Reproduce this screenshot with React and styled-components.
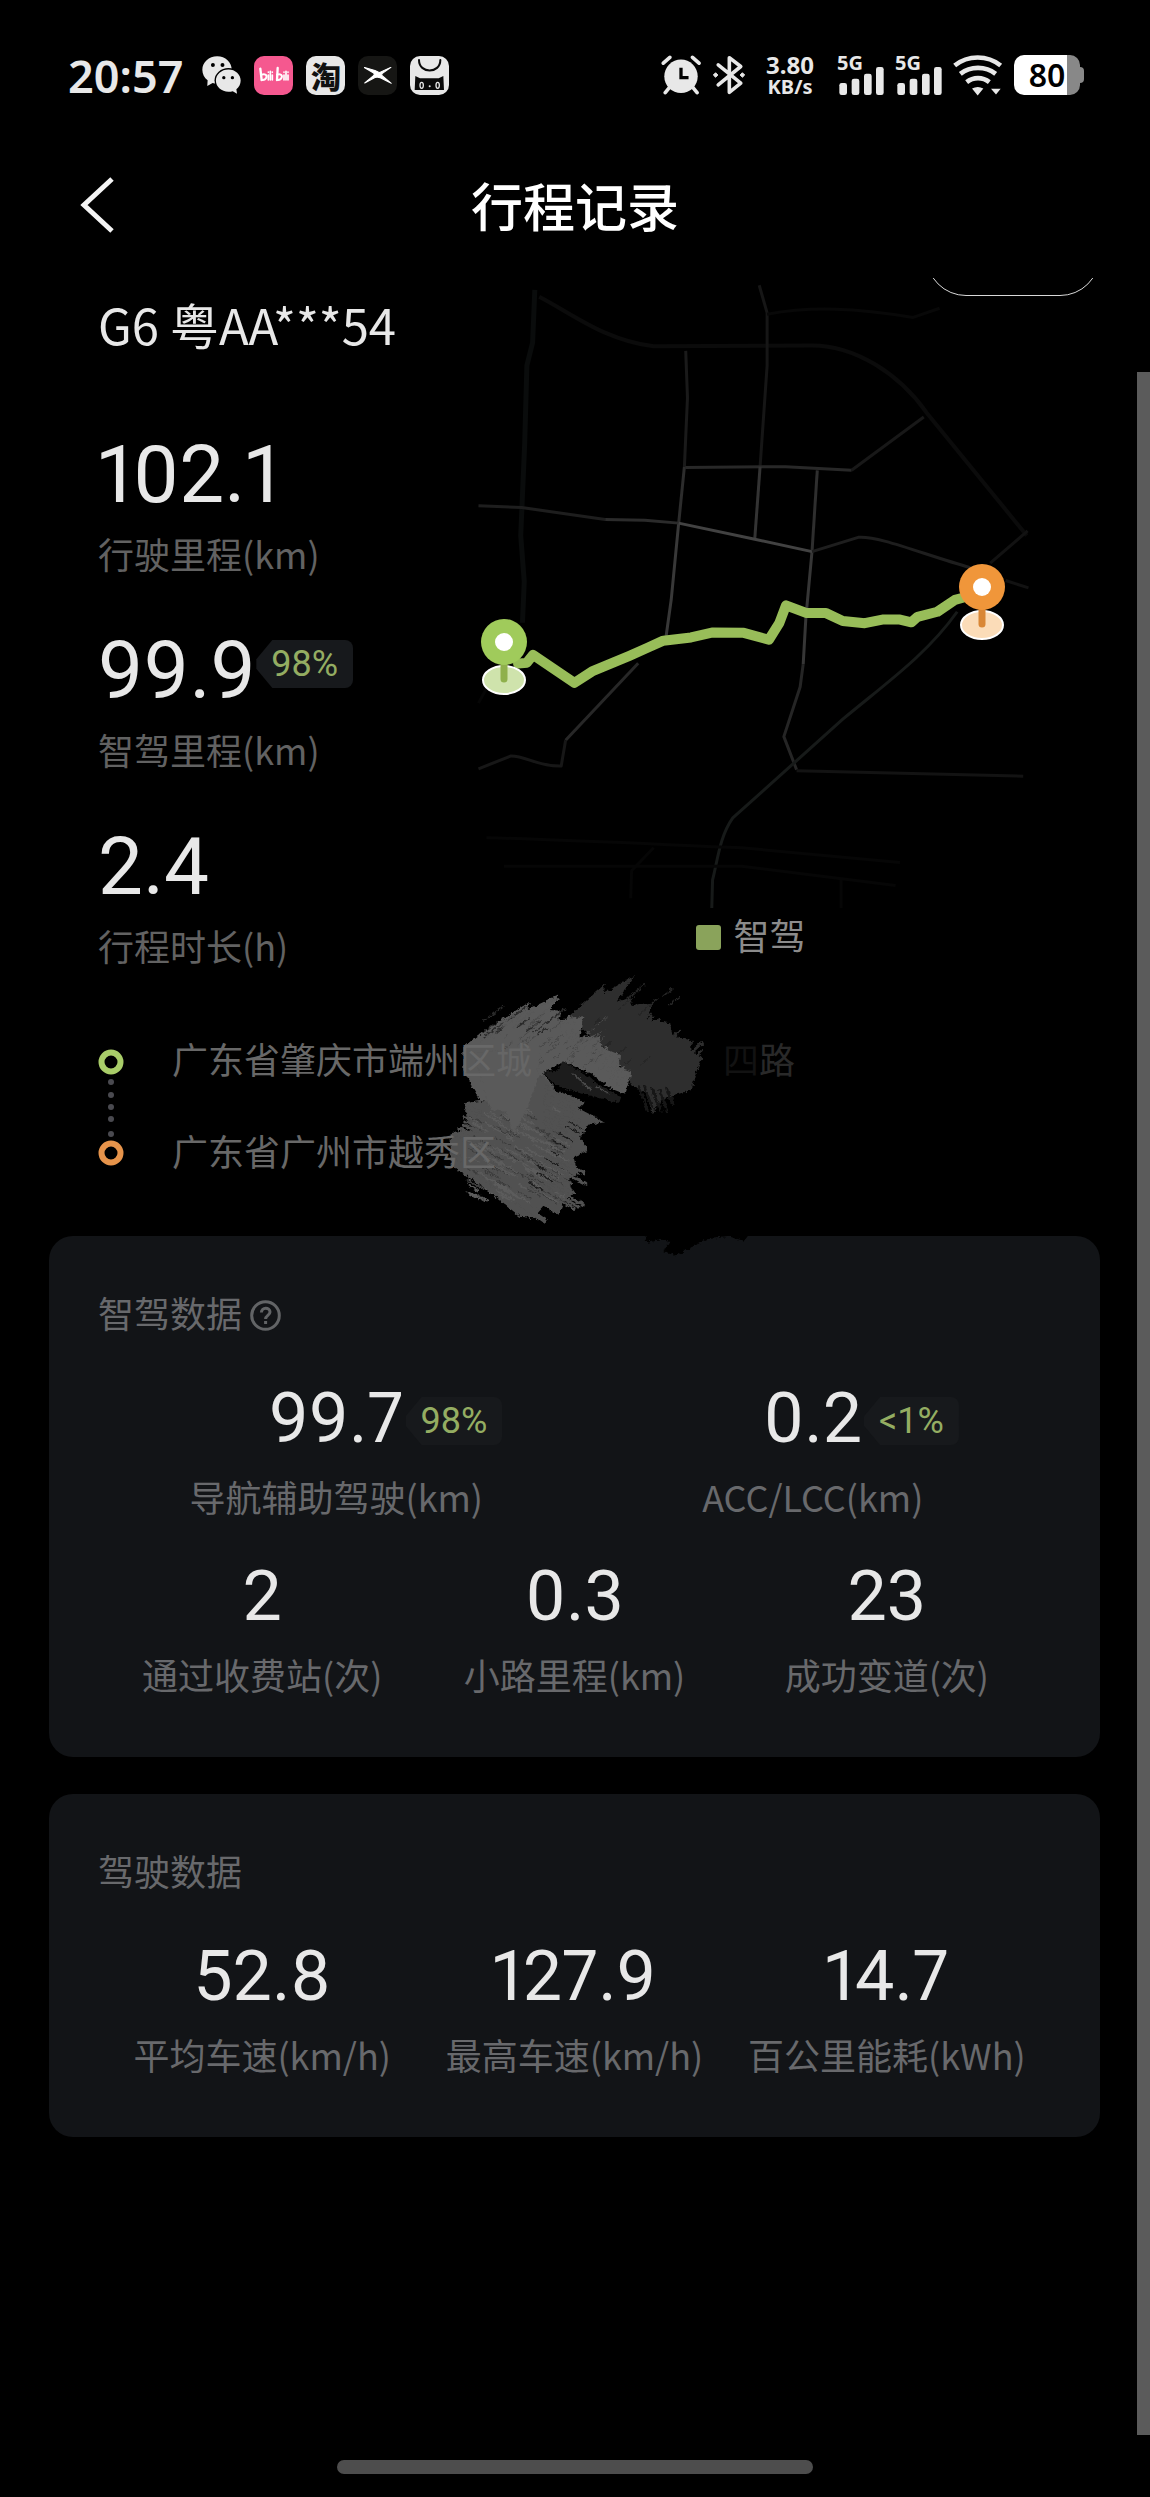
import React from "react";
import styled, { createGlobalStyle } from "styled-components";

const textFont = `"Noto Sans CJK SC", "Noto Sans", sans-serif`;
const numberFont = `Roboto, "Noto Sans", sans-serif`;

const GlobalStyle = createGlobalStyle`
  *, *::before, *::after { box-sizing: border-box; }
  body { margin: 0; background: #000; font-family: ${textFont}; }
  h1, h2, p, dl, dd, dt, ul { margin: 0; padding: 0; font-weight: inherit; }
`;

const Page = styled.div`
  display: flex;
  flex-direction: column;
  min-height: 100vh;
  background: #000;
  color: #e8e8e8;
`;

/* ---------- status bar ---------- */

const StatusBar = styled.header`
  display: flex;
  justify-content: space-between;
  align-items: center;
  height: 150px;
  padding: 0 66px 0 68px;
  line-height: 1;
`;

const StatusGroup = styled.div`
  display: flex;
  align-items: center;
  gap: ${(p) => p.$gap}px;
`;

const Clock = styled.time`
  font: 600 45px/45px "Noto Sans", ${textFont};
  margin-right: 6px;
`;

const AppTile = styled.span`
  display: grid;
  place-items: center;
  width: 39px;
  height: 39px;
  border-radius: 10px;
  background: ${(p) => p.$bg};
  color: ${(p) => p.$fg};
  font: 900 30px/39px ${textFont};
`;

const NetSpeed = styled.div`
  display: flex;
  flex-direction: column;
  align-items: center;
  margin: 0 12px 0 9px;
  font: 700 24px/24px "Noto Sans", sans-serif;
`;

const NetUnit = styled.span`
  font-size: 20px;
  line-height: 20px;
  font-weight: 700;
`;

const Signal = styled.div`
  display: grid;
  width: 47px;
  height: 40px;

  > * { grid-area: 1 / 1; }
  > svg { align-self: end; justify-self: end; }
`;

const SignalLabel = styled.span`
  font: 700 20px/16px "Noto Sans", sans-serif;
`;

const Battery = styled.div`
  display: flex;
  align-items: center;
`;

const BatteryBody = styled.div`
  width: 66px;
  height: 40px;
  border-radius: 10px;
  background: linear-gradient(to right, #fff 80%, #888 80%);
  color: #000;
  text-align: center;
  font: 600 32px/40px "Noto Sans", sans-serif;
`;

const BatteryCap = styled.div`
  width: 4px;
  height: 16px;
  border-radius: 0 4px 4px 0;
  background: #888;
`;

/* ---------- title bar ---------- */

const TitleBar = styled.nav`
  display: grid;
  grid-template-columns: 1fr auto 1fr;
  align-items: center;
  height: 110px;
  margin-bottom: 18px;
  padding: 0 78px;
`;

const BackButton = styled.button`
  justify-self: start;
  display: flex;
  padding: 0;
  border: 0;
  background: none;
  color: #f4f4f4;
`;

const Title = styled.h1`
  font-size: 52px;
  line-height: 74px;
  font-weight: 500;
  color: #fff;
`;

/* ---------- body ---------- */

const Body = styled.div`
  flex: 1;
  display: flex;
  overflow: hidden;
`;

const Content = styled.main`
  position: relative;
  flex: 1;
  min-width: 0;
  padding: 0 37px 0 49px;
`;

const ScrollThumb = styled.div`
  width: 13px;
  margin-top: 94px;
  background: #5b5b5b;
`;

const PillButton = styled.button`
  position: absolute;
  top: -62px;
  right: 37px;
  width: 174px;
  height: 80px;
  border: 1px solid #d8d8d8;
  border-radius: 40px;
  background: none;
`;

const Trip = styled.section`
  display: grid;
  grid-template-columns: 362px 1fr;
  padding-left: 49px;
`;

const TripFacts = styled.div`
  padding-top: 18px;
`;

const Plate = styled.p`
  margin-bottom: 83px;
  font-size: 49px;
  line-height: 56px;
  white-space: nowrap;
`;

const FactList = styled.dl`
  display: flex;
  flex-direction: column;
  gap: 56px;
`;

const Fact = styled.div`
  display: flex;
  flex-direction: column-reverse;
  gap: 16px;
`;

const FactValue = styled.dd`
  display: flex;
  font: 400 80px/80px ${numberFont};
  font-variant-numeric: proportional-nums;
`;

const Label = styled.dt`
  font-size: 36px;
  line-height: 44px;
  white-space: nowrap;
  color: ${(p) => (p.$onCard ? "#68696c" : "#626262")};
`;

const Badge = styled.span`
  height: 48px;
  margin-top: 9px;
  padding: 0 15px;
  border-radius: 8px;
  background: #17191c;
  clip-path: polygon(16px 0, 100% 0, 100% 100%, 16px 100%, 0 60%, 0 40%);
  color: #94ad62;
  font: 400 36px/48px ${numberFont};
  white-space: nowrap;
`;

const MapPanel = styled.figure`
  margin: 0;
  padding-right: 58px;
  display: flex;
  flex-direction: column;
  align-items: center;
  gap: 4px;

  > svg { width: 100%; height: auto; }
`;

const Legend = styled.figcaption`
  display: flex;
  align-items: center;
  gap: 12px;
  font-size: 36px;
  line-height: 44px;
  color: #8b8b8b;

  &::before {
    content: "";
    width: 25px;
    height: 25px;
    margin-top: 6px;
    border-radius: 3px;
    background: #8aa35b;
  }
`;

/* ---------- addresses ---------- */

const Route = styled.section`
  position: relative;
  display: flex;
  gap: 48px;
  margin: 69px 0 64px;
  padding-left: 49px;

  > svg:first-child { margin-top: 13px; }
`;

const Scribble = styled.svg`
  position: absolute;
  left: 381px;
  top: -76px;
  z-index: 1;
  pointer-events: none;
`;

const AddressList = styled.ul`
  position: relative;
  z-index: 2;
  display: flex;
  flex-direction: column;
  gap: 48px;
  list-style: none;
`;

const Address = styled.li`
  font-size: 36px;
  line-height: 44px;
  color: #686868;
  white-space: nowrap;
`;

const Erased = styled.span`
  margin-left: ${(p) => p.$gap || 0}px;
  color: ${(p) => p.$tone};
`;

/* ---------- cards ---------- */

const Cards = styled.div`
  display: flex;
  flex-direction: column;
  gap: 37px;
`;

const Card = styled.section`
  padding: 54px 49px 61px;
  border-radius: 24px;
  background: #121417;
`;

const CardTitle = styled.h2`
  display: flex;
  align-items: center;
  gap: 8px;
  margin-bottom: 48px;
  font-size: 36px;
  line-height: 44px;
  color: #68696c;
`;

const HelpButton = styled.button`
  display: flex;
  margin-top: 6px;
  padding: 0;
  border: 0;
  background: none;
  color: #626466;
`;

const MetricRow = styled.dl`
  display: grid;
  grid-template-columns: repeat(${(p) => p.$columns}, 1fr);
  padding: 0 ${(p) => (p.$columns === 3 ? 8 : 0)}px;

  & + & { margin-top: 42px; }
`;

const Metric = styled.div`
  display: flex;
  flex-direction: column-reverse;
  align-items: center;
  gap: 20px;
`;

const MetricValue = styled.dd`
  position: relative;
  font: 400 70px/72px ${numberFont};
  font-variant-numeric: proportional-nums;

  ${Badge} {
    position: absolute;
    left: calc(100% + 2px);
    top: 6px;
  }
`;

const HomeArea = styled.footer`
  display: flex;
  justify-content: center;
  padding: 25px 0 23px;
`;

const HomeBar = styled.div`
  width: 476px;
  height: 14px;
  border-radius: 7px;
  background: #4d4d4d;
`;

/* ---------- icons ---------- */

const WechatIcon = () => (
  <svg width="39" height="39" viewBox="486 74 118 117" fill="#e8e8e8" aria-label="WeChat">
    <path d="M532 74c-25 0-45 18-45 41 0 13 6 24 16 32l-1 17 16-9c4 1 9 2 14 2 25 0 44-19 44-42s-19-41-44-41z" />
    <ellipse cx="566" cy="147" rx="42" ry="37" fill="#000" />
    <path d="M566 114c-21 0-38 15-38 34s17 34 38 34c5 0 9-1 13-2l13 8-2-14c8-6 13-15 13-26 0-19-16-34-37-34z" />
    <g fill="#000">
      <circle cx="519" cy="101" r="6" /><circle cx="548" cy="101" r="6" />
      <circle cx="552" cy="139" r="5" /><circle cx="578" cy="139" r="5" />
    </g>
  </svg>
);

const BiliMark = () => (
  <svg width="32" height="18" viewBox="0 0 96 54" fill="none" stroke="#fff" strokeWidth="5" strokeLinecap="round">
    <path d="M7 8l4 34M59 6l-2 36" strokeWidth="7" />
    <path d="M11 26c10-4 17 2 14 9s-8 8-14 7M57 26c10-4 17 2 14 9s-8 8-14 7" strokeWidth="6" />
    <path d="M31 27v15M37 16v26M43 27v15M31 18v1M43 18v1M78 27v15M84 16v26M90 27v15M78 18v1M90 18v1" />
  </svg>
);

const XpengMark = () => (
  <svg width="28" height="17" viewBox="970 108 82 50" fill="#fff">
    <path d="M970 109l32 9c6 2 9 6 14 6l33-15-24 17c-4 3-4 6 0 9l25 21-32-16c-6-3-10-3-16-1l-30 16 25-21c4-3 4-6 0-9z" stroke="#fff" strokeWidth="3" strokeLinejoin="round" />
  </svg>
);

const CatBagMark = () => (
  <svg width="39" height="39" viewBox="1107 74 117 117">
    <path d="M1134 86c0 42 64 42 64 0" fill="none" stroke="#0a0a0a" strokeWidth="6" strokeLinecap="round" />
    <path d="M1123 134l14 7h56l14-7 2 42h-88z" fill="#0a0a0a" />
    <g fill="none" stroke="#e8e8e8" strokeWidth="4">
      <ellipse cx="1142" cy="162" rx="5" ry="9" /><ellipse cx="1190" cy="162" rx="5" ry="9" />
    </g>
    <circle cx="1166" cy="165" r="3" fill="#e8e8e8" />
  </svg>
);

const AlarmIcon = () => (
  <svg width="40" height="40" viewBox="63 73 120 122" aria-label="Alarm">
    <g stroke="#e8e8e8" strokeWidth="11" strokeLinecap="round">
      <path d="M69 98l20-18M178 98l-20-18M88 172l-13 16M159 172l13 16" />
    </g>
    <circle cx="123" cy="138" r="51" fill="#e8e8e8" />
    <path d="M123 112v30h23" fill="none" stroke="#000" strokeWidth="10" />
  </svg>
);

const BluetoothIcon = () => (
  <svg width="34" height="40" viewBox="222 73 104 122" fill="none" stroke="#e8e8e8" strokeWidth="11" aria-label="Bluetooth">
    <path d="M241 103l69 56-35 28V81l35 27-69 56" strokeLinejoin="round" strokeLinecap="round" />
    <path d="M233 127l7 7-7 7-7-7zM315 127l7 7-7 7-7-7z" fill="#e8e8e8" strokeWidth="3" />
  </svg>
);

const SignalBars = () => (
  <svg width="45" height="28" viewBox="591 108 135 84" fill="#e8e8e8">
    <rect x="592" y="156" width="23" height="36" rx="7" />
    <rect x="629" y="143" width="23" height="49" rx="7" />
    <rect x="666" y="128" width="23" height="64" rx="7" />
    <rect x="702" y="108" width="23" height="84" rx="7" />
  </svg>
);

const WifiIcon = () => (
  <svg width="50" height="41" viewBox="941 71 150 122" fill="none" stroke="#e8e8e8" strokeWidth="14" aria-label="Wi-Fi">
    <path d="M946 102c40-32 98-32 138 0M963 127c30-24 76-24 106 0M982 152c20-16 48-16 68 0" />
    <path d="M998 171c12-6 23-6 34 0l-17 21zM1055 172h29l-14 17z" fill="#e8e8e8" stroke="none" />
  </svg>
);

const HelpIcon = () => (
  <svg width="31" height="31" viewBox="0 0 31 31" fill="none" stroke="currentColor" strokeWidth="3">
    <circle cx="15.5" cy="15.5" r="13.8" />
    <path d="M11.4 12.6c0-6 8.6-5.6 8.6-.6 0 3.400-4.400 3.400-4.400 7M15.600 21v3" />
  </svg>
);

/* ---------- map ---------- */

const roads = [
  { d: "M170 65L165 180L152 230L147 400L138 600L146 700L142 790", c: "#0a0c0c", w: 5 },
  { d: "M180 80C260 120 330 175 440 188L800 186C900 186 1000 250 1060 332L1288 600", c: "#0b0b0b", w: 4 },
  { d: "M680 55L698 115L698 230L682 450", c: "#161616" },
  { d: "M698 118C800 100 900 105 1030 125L1090 105", c: "#080808" },
  { d: "M513 198L517 300L510 450", c: "#1a1a1a" },
  { d: "M510 450L497 573", c: "#2c2c2c" },
  { d: "M497 573L480 740L468 822", c: "#383838" },
  { d: "M512 452L740 450L890 458", c: "#282828" },
  { d: "M890 458L1054 342", c: "#181818" },
  { d: "M682 450L670 606", c: "#333" },
  { d: "M812 458L800 635", c: "#2e2e2e" },
  { d: "M800 635L786 780L780 880", c: "#363636" },
  { d: "M780 880L773 930L736 1038L765 1110", c: "#252525" },
  { d: "M42 535L140 539L330 565", c: "#1e1e1e" },
  { d: "M330 565L420 567L497 573", c: "#2b2b2b" },
  { d: "M497 573L670 608L800 635", c: "#424242" },
  { d: "M800 635L905 604C950 600 1050 640 1160 670", c: "#1e1e1e" },
  { d: "M1205 660L1290 590M1240 698L1292 714", c: "#121212" },
  { d: "M405 878L240 1046", c: "#272727" },
  { d: "M240 1046L230 1102C180 1104 150 1080 116 1080L42 1108", c: "#171717" },
  { d: "M765 1112L1280 1124", c: "#131313" },
  { d: "M1130 766C1060 860 970 920 870 1000L620 1215C590 1255 585 1310 574 1350L572 1420", c: "#171a19" },
  { d: "M60 1258C300 1265 500 1275 640 1280L1000 1312M100 1320L640 1320L990 1362M440 1280L390 1330L388 1390M866 1345V1420M62 930L42 965", c: "#060606" },
];

const Pin = ({ x, y, color, stem, base }) => (
  <g transform={`translate(${x} ${y})`}>
    <ellipse cx="0" cy="38" rx="21" ry="14" fill={base} stroke="#fff" strokeWidth="2" />
    <path d="M0 18v19" stroke={stem} strokeWidth="7" strokeLinecap="round" />
    <circle r="23" fill={color} />
    <circle r="9" fill="#fff" />
  </g>
);

const RouteMap = () => (
  <svg viewBox="0 0 582 630" fill="none" strokeLinejoin="round" role="img" aria-label="行程路线">
    <g transform="translate(0 -18) scale(.44 .4592)">
      {roads.map((r) => (
        <path key={r.d} d={r.d} stroke={r.c} strokeWidth={r.w || 3} vectorEffect="non-scaling-stroke" />
      ))}
      <path
        d="M132 879L152 877L166 860L260 921L300 896L385 862L425 845L462 829L525 822L575 811L645 812L702 827L726 790L741 752L788 769L832 769L870 786L920 791L960 783L1000 783L1026 789L1040 777L1085 766L1125 740L1145 735"
        stroke="#98bd59"
        strokeWidth="10"
        vectorEffect="non-scaling-stroke"
        strokeLinecap="round"
      />
    </g>
    <Pin x={44} y={364} color="#a0cb5b" stem="#8fb04c" base="#cfe3ac" />
    <Pin x={522} y={309} color="#f0963a" stem="#d98736" base="#fbdcb8" />
  </svg>
);

/* ---------- scribble ---------- */

const noise = (n) => {
  const v = Math.sin(n * 127.1) * 43758.5453;
  return v - Math.floor(v);
};

const hatch = (count, from, to, dx, dy, seed) =>
  Array.from({ length: count }, (_, i) => {
    const t = i / (count - 1);
    const len = 0.4 + noise(i + seed) * 0.7;
    const x = from[0] + (to[0] - from[0]) * t + (noise(i + seed + 50) - 0.5) * 16;
    const y = from[1] + (to[1] - from[1]) * t + (noise(i + seed + 90) - 0.5) * 16;
    return `M${x.toFixed(1)} ${y.toFixed(1)}l${(dx * len).toFixed(1)} ${(dy * len).toFixed(1)}`;
  }).join("");

/* short dashes scattered over a box, all leaning the same way */
const flecks = (count, [x0, y0, x1, y1], dx, dy, seed) =>
  Array.from({ length: count }, (_, i) => {
    const len = 0.3 + noise(i * 3 + seed) * 0.9;
    const x = x0 + (x1 - x0) * noise(i * 5 + seed + 1);
    const y = y0 + (y1 - y0) * noise(i * 7 + seed + 2);
    return `M${x.toFixed(1)} ${y.toFixed(1)}l${(dx * len).toFixed(1)} ${(dy * len).toFixed(1)}`;
  }).join("");

const ScribbleDrawing = () => (
  <Scribble width="400" height="320" viewBox="0 0 1200 960" fill="none" strokeLinecap="round" aria-hidden="true">
    <filter id="rough" x="-5%" y="-5%" width="110%" height="110%">
      <feTurbulence type="fractalNoise" baseFrequency="0.08" numOctaves="3" seed="4" />
      <feDisplacementMap in="SourceGraphic" scale="16" xChannelSelector="R" yChannelSelector="G" />
    </filter>
    <g filter="url(#rough)">
      <g fill="#2f2f2f" stroke="#2f2f2f">
        <path stroke="none" d="M410 175L525 72L522 100L612 48L560 125L602 112L605 135L668 128L648 178L720 190L728 226L778 240L788 280L818 290L795 345L785 390L700 415L665 460L650 400L610 380L560 300L450 200z" />
        <path strokeWidth="8" d={hatch(14, [600, 170], [780, 300], 40, -37, 3)} />
        <path strokeWidth="7" d={hatch(8, [620, 380], [720, 390], 26, 70, 15)} stroke="#171717" />
        <path strokeWidth="4" d={flecks(10, [480, 100, 740, 360], 46, -38, 230)} stroke="#262626" />
      </g>
      <g fill="#5a5a5a" stroke="#5a5a5a">
        <path stroke="none" d="M100 260L180 200L300 125L290 150L385 105L360 150L395 152L385 178L460 172L448 232L508 228L515 262L570 285L566 320L606 335L585 402L540 385L480 340L400 305L340 340L370 380L250 430L150 420L120 370L100 330z" />
        <path strokeWidth="9" d={hatch(12, [150, 245], [330, 165], 80, -62, 21)} />
        <path strokeWidth="9" d={hatch(14, [390, 210], [570, 370], 34, -42, 33)} />
      </g>
      <g fill="#515151" stroke="#515151">
        <path stroke="none" d="M105 430L200 415L340 345L375 390L465 425L445 445L525 487L470 495L450 535L475 572L430 590L445 640L415 660L430 700L400 725L385 765L340 740L310 775L270 770L180 695L62 615L62 520L130 510L110 470z" />
        <path strokeWidth="9" d={hatch(18, [350, 380], [340, 700], 116, 64, 45)} />
        <path strokeWidth="9" d={hatch(18, [80, 590], [290, 740], 72, 50, 61)} />
        <path strokeWidth="9" d={hatch(9, [115, 440], [80, 540], 60, 24, 76)} />
      </g>
      <path strokeWidth="5" stroke="#5c5c5c" d={flecks(70, [110, 440, 380, 710], 60, 34, 300)} />
      <path strokeWidth="3" stroke="#3a3a3a" d={flecks(50, [110, 460, 390, 710], 50, 28, 410)} />
      <path strokeWidth="4" stroke="#1c1c1c" d={hatch(9, [300, 660], [420, 480], 46, 26, 170)} />
      <path strokeWidth="4" stroke="#2b2b2b" d={flecks(12, [160, 180, 360, 240], 50, -38, 520)} />
      <path strokeWidth="3" stroke="#4a4a4a" d={flecks(40, [200, 190, 540, 330], 36, -28, 610)} />
      <path fill="#5a5a5a" d="M130 280L330 260L320 370L290 450L250 520L230 455L180 450z" />
      <path fill="#1b1b1b" d="M340 338L385 330L398 304L470 345L500 370L572 410L565 430L500 412L430 395L370 370z" />
      <path stroke="#4a4a4a" strokeWidth="5" d="M430 340L480 388M500 380L535 398" />
      <path fill="#000" d="M640 815L960 815L940 842L900 830L830 838L770 868L740 886L700 874L722 846L690 838L655 848z" />
      <path stroke="#000" strokeWidth="12" d="M650 840L670 828M712 866L760 840M735 880L810 842" />
    </g>
  </Scribble>
);

const RouteMarkers = () => (
  <svg width="26" height="117" viewBox="0 0 26 117" fill="none" strokeWidth="6">
    <circle cx="13" cy="13" r="9.500" stroke="#a9cd69" />
    <circle cx="13" cy="104" r="9.500" stroke="#e7944b" />
    <g fill="#4a4a50">
      {[33, 46, 58, 70, 85].map((y) => (
        <circle key={y} cx="13" cy={y} r="3" />
      ))}
    </g>
  </svg>
);

/* ---------- data ---------- */

const facts = [
  { value: "102.1", label: "行驶里程(km)" },
  { value: "99.9", label: "智驾里程(km)", badge: "98%" },
  { value: "2.4", label: "行程时长(h)" },
];

const assisted = [
  [
    { value: "99.7", label: "导航辅助驾驶(km)", badge: "98%" },
    { value: "0.2", label: "ACC/LCC(km)", badge: "<1%" },
  ],
  [
    { value: "2", label: "通过收费站(次)" },
    { value: "0.3", label: "小路里程(km)" },
    { value: "23", label: "成功变道(次)" },
  ],
];

const driving = [
  [
    { value: "52.8", label: "平均车速(km/h)" },
    { value: "127.9", label: "最高车速(km/h)" },
    { value: "14.7", label: "百公里能耗(kWh)" },
  ],
];

const Metrics = ({ rows }) =>
  rows.map((row) => (
    <MetricRow key={row[0].label} $columns={row.length}>
      {row.map((m) => (
        <Metric key={m.label}>
          <Label $onCard>{m.label}</Label>
          <MetricValue>
            {m.value}
            {m.badge && <Badge>{m.badge}</Badge>}
          </MetricValue>
        </Metric>
      ))}
    </MetricRow>
  ));

export default function App() {
  return (
    <Page lang="zh-CN">
      <GlobalStyle />
      <StatusBar>
        <StatusGroup $gap={13}>
          <Clock>20:57</Clock>
          <WechatIcon />
          <AppTile $bg="#f5588f"><BiliMark /></AppTile>
          <AppTile $bg="#e8e8e8" $fg="#111">淘</AppTile>
          <AppTile $bg="#161614"><XpengMark /></AppTile>
          <AppTile $bg="#e8e8e8"><CatBagMark /></AppTile>
        </StatusGroup>
        <StatusGroup $gap={11}>
          <AlarmIcon />
          <BluetoothIcon />
          <NetSpeed>
            <span>3.80</span>
            <NetUnit>KB/s</NetUnit>
          </NetSpeed>
          <Signal><SignalLabel>5G</SignalLabel><SignalBars /></Signal>
          <Signal><SignalLabel>5G</SignalLabel><SignalBars /></Signal>
          <WifiIcon />
          <Battery>
            <BatteryBody>80</BatteryBody>
            <BatteryCap />
          </Battery>
        </StatusGroup>
      </StatusBar>

      <TitleBar>
        <BackButton aria-label="返回">
          <svg width="38" height="56" viewBox="0 0 38 56" fill="none" stroke="currentColor" strokeWidth="5">
            <path d="M34 2L6 28l28 26" />
          </svg>
        </BackButton>
        <Title>行程记录</Title>
      </TitleBar>

      <Body>
        <Content>
          <PillButton aria-label="更多" />
          <Trip>
            <TripFacts>
              <Plate>G6 粤AA***54</Plate>
              <FactList>
                {facts.map((f) => (
                  <Fact key={f.label}>
                    <Label>{f.label}</Label>
                    <FactValue>
                      {f.value}
                      {f.badge && <Badge>{f.badge}</Badge>}
                    </FactValue>
                  </Fact>
                ))}
              </FactList>
            </TripFacts>
            <MapPanel>
              <RouteMap />
              <Legend>智驾</Legend>
            </MapPanel>
          </Trip>

          <Route>
            <RouteMarkers />
            <ScribbleDrawing />
            <AddressList>
              <Address>
                广东省肇庆市端州区<Erased $tone="#666">城</Erased>
                <Erased $gap={191} $tone="#121212">四</Erased>
                <Erased $tone="#292929">路</Erased>
              </Address>
              <Address>广东省广州市越秀区</Address>
            </AddressList>
          </Route>

          <Cards>
            <Card>
              <CardTitle>
                智驾数据
                <HelpButton aria-label="说明"><HelpIcon /></HelpButton>
              </CardTitle>
              <Metrics rows={assisted} />
            </Card>
            <Card>
              <CardTitle>驾驶数据</CardTitle>
              <Metrics rows={driving} />
            </Card>
          </Cards>
        </Content>
        <ScrollThumb />
      </Body>

      <HomeArea>
        <HomeBar />
      </HomeArea>
    </Page>
  );
}
